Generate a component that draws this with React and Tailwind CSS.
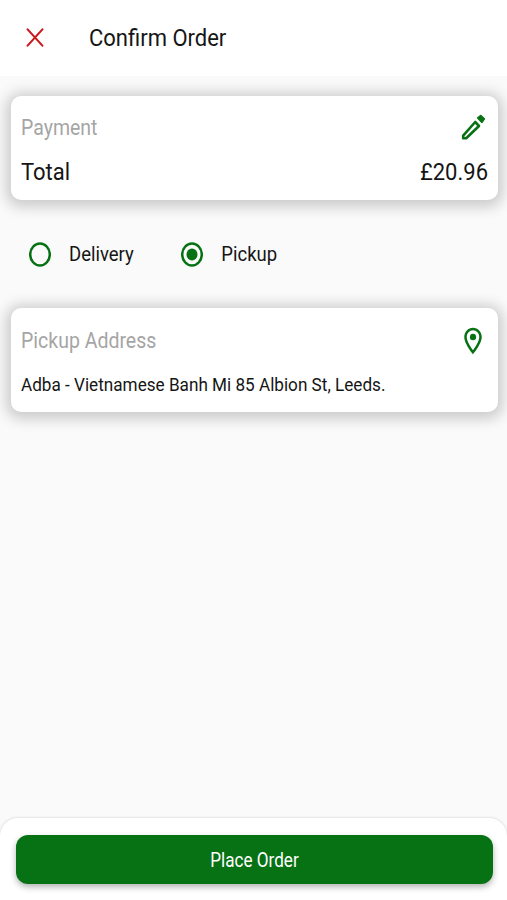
import React, { useState } from 'react';

const EditIcon = () => (
  <svg viewBox="0 0 30 33" className="h-[33px] w-[30px]" fill="none" stroke="currentColor" strokeLinejoin="round">
    <path d="M5.2 27.3V24.6L17.2 11L21 15L8.2 27.3Z" strokeWidth="2.6" />
    <path d="M19.8 7L22.7 4.7L26.2 8L23.8 11.2Z" fill="currentColor" strokeWidth="1.8" />
  </svg>
);

const PinIcon = () => (
  <svg viewBox="0 0 24 24" preserveAspectRatio="none" className="h-[32px] w-[30px]" fill="currentColor">
    <path d="M12 2C8.13 2 5 5.13 5 9c0 5.25 7 13 7 13s7-7.75 7-13c0-3.87-3.13-7-7-7zM7 9c0-2.76 2.24-5 5-5s5 2.24 5 5c0 2.88-2.88 7.19-5 9.88C9.92 16.21 7 11.85 7 9z" />
    <circle cx="12" cy="9" r="2.5" />
  </svg>
);

const Card = ({ title, icon, headerClass = '', children }) => (
  <section className="mr-[9px] ml-[11px] flex h-[104px] flex-col justify-between rounded-[10px] bg-white pt-[15px] pr-[10px] pb-[14px] pl-[10px] shadow-[0_2px_14px_5px_rgba(0,0,0,0.19)]">
    <div className={`flex items-center justify-between text-[#077214] ${headerClass}`}>
      <h2 className="origin-left scale-y-[1.13] text-[19.5px] leading-6 text-[#a5a5a5]">{title}</h2>
      {icon}
    </div>
    {children}
  </section>
);

const RadioOption = ({ label, checked, onSelect }) => (
  <button type="button" role="radio" aria-checked={checked} onClick={onSelect} className="flex items-center gap-[18px]">
    <svg viewBox="0 0 22 25" className="h-[25px] w-[22px] text-[#077214]">
      <ellipse cx="11" cy="12.5" rx="9.8" ry="11" fill="none" stroke="currentColor" strokeWidth="2.5" />
      {checked && <ellipse cx="11" cy="12.5" rx="5.5" ry="6.1" fill="currentColor" />}
    </svg>
    <span className="scale-y-[1.12] text-[18.5px] leading-6">{label}</span>
  </button>
);

const App = () => {
  const [method, setMethod] = useState('pickup');

  return (
    <div className="flex h-screen w-full flex-col overflow-hidden bg-[#fafafa] font-['Roboto',sans-serif] text-[#151515]">
      <header className="flex h-[76px] shrink-0 items-center bg-white pl-[26px]">
        <button type="button" aria-label="Close" className="pb-[2px] text-[#c9181e]">
          <svg viewBox="0 0 18 19" className="h-[19px] w-[18px]" fill="none" stroke="currentColor" strokeWidth="2.1" strokeLinecap="round">
            <path d="M1.6 1.4L16.4 17.6M16.4 1.4L1.6 17.6" />
          </svg>
        </button>
        <h1 className="ml-[45px] scale-y-110 text-[22px] leading-7">Confirm Order</h1>
      </header>

      <main className="flex-1 pt-[20px]">
        <Card title="Payment" icon={<EditIcon />}>
          <div className="flex h-[28px] items-center justify-between text-[22px] leading-7">
            <span className="scale-y-110">Total</span>
            <span className="scale-y-110">£20.96</span>
          </div>
        </Card>

        <div role="radiogroup" className="flex h-[108px] items-center gap-[47.5px] pl-[29px]">
          <RadioOption label="Delivery" checked={method === 'delivery'} onSelect={() => setMethod('delivery')} />
          <RadioOption label="Pickup" checked={method === 'pickup'} onSelect={() => setMethod('pickup')} />
        </div>

        <Card title="Pickup Address" icon={<PinIcon />} headerClass="pt-[2px]">
          <div className="flex h-[28px] items-center">
            <p className="scale-y-110 text-[17.15px] leading-6 whitespace-nowrap">Adba - Vietnamese Banh Mi 85 Albion St, Leeds.</p>
          </div>
        </Card>
      </main>

      <footer className="h-[82px] shrink-0 rounded-t-[18px] bg-white pt-[17px] pr-[14px] pl-[16px] shadow-[0_0_3px_rgba(0,0,0,0.18)]">
        <button type="button" className="flex h-[49px] w-full items-center justify-center rounded-[12px] bg-[#077214] text-white shadow-[0_3px_6px_rgba(0,0,0,0.3)]">
          <span className="scale-y-[1.14] text-[17.1px] leading-6">Place Order</span>
        </button>
      </footer>
    </div>
  );
};

export default App;
